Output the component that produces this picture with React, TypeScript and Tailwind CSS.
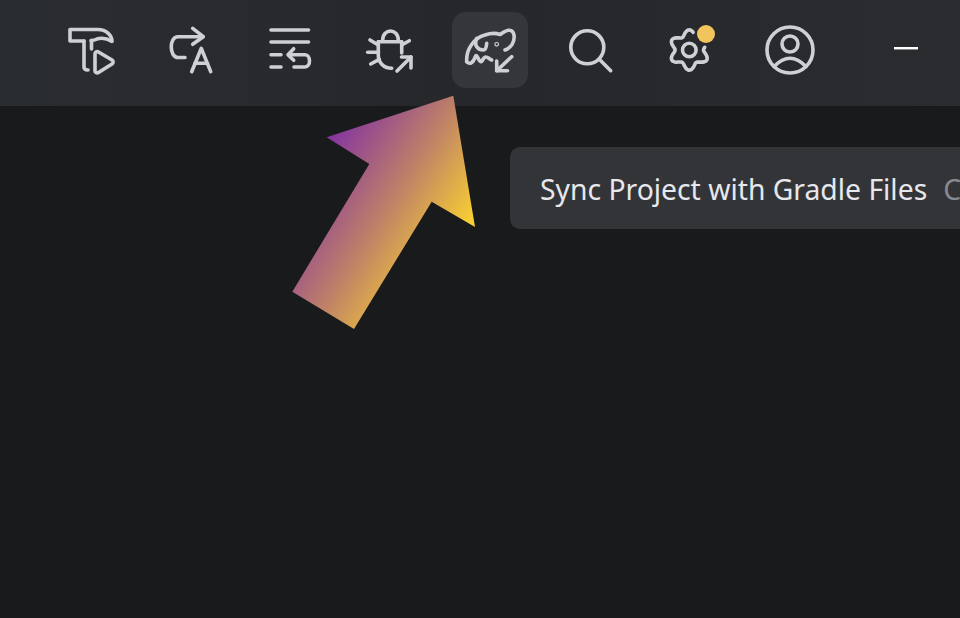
const gearPath = (() => {
  const pts: string[] = [];
  for (let i = 0; i <= 60; i++) {
    const t = Math.PI * (0.433 + (i / 60) * 1.622);
    const r = 17.2 - 3 * Math.cos(6 * t);
    const x = 37.3 + r * Math.cos(t);
    const y = 38 - r * Math.sin(t);
    pts.push(`${i === 0 ? "M" : "L"}${x.toFixed(2)} ${y.toFixed(2)}`);
  }
  return pts.join(" ");
})();

function Icon({ children }: { children: React.ReactNode }) {
  return (
    <svg
      width="76"
      height="76"
      viewBox="0 0 76 76"
      fill="none"
      stroke="#ced0d6"
      strokeWidth="3.6"
      strokeLinecap="round"
      strokeLinejoin="round"
    >
      {children}
    </svg>
  );
}

const icons = [
  <>
    <path d="M32 29H18V17.5H46C54 17.5 60 23 60 29.5C55 26.5 50 25.5 45 27C43 28 41 28.5 39 28.5" />
    <path d="M32 29V55C32 57 33 58 36 58" />
    <path d="M39.5 29V37" />
    <path d="M43 42C43 40 45 39 46.5 40L60 48C61.5 49 61.5 51 60 52L46.5 60.5C45 61.5 43 60.5 43 59Z" />
  </>,
  <>
    <path d="M33 45.5H26C17 45.5 17 24.7 26 24.7H51" />
    <path d="M40.7 16.3L51.3 24.7L40.7 32.3" />
    <path d="M39.7 59.7L49.3 36.3L58.7 59.7" />
    <path d="M43 51.3H55.3" />
  </>,
  <>
    <path d="M19 18H56.5" />
    <path d="M19 30H56.5" />
    <path d="M19 42.7H29" />
    <path d="M19 55H29" />
    <path d="M37 42.7H53C59 42.7 59 55 53 55H42" />
    <path d="M41.7 36.7L36 42.7L41.7 48.3" />
  </>,
  <>
    <path d="M26.3 29.7H49.7" />
    <path d="M30.7 28C31 16 46 16 46.3 28" />
    <path d="M26.3 29.7V43C26.3 50 31 56.3 39.7 56.3" />
    <path d="M49.7 29.7V41" />
    <path d="M18 28L26.3 33" />
    <path d="M15.7 40.3H26.3" />
    <path d="M18.7 52L27.3 47.3" />
    <path d="M57.3 28.7L49.7 33" />
    <path d="M45 59L59 45" />
    <path d="M49.5 45H59V56" />
  </>,
  <>
    <path d="M14.7 49.7C14 37 22 26 33 23C39 21 44 21 48 22.5C52 20 60 14 62 23C63 30 59 36 53 38" />
    <path d="M14.7 49.7C18 53 21 51 23.7 44C25 42 27 49.7 29 49.7C31 49.7 31 44.7 34 45C36 45 37 47 39.7 48" />
    <path d="M24.7 26.3C22 33 25 38 31.3 38C33.5 38 34.5 34 34.7 31.3" />
    <circle cx="44.7" cy="32.3" r="0.6" />
    <path d="M59.7 44.7L44.7 58.7" />
    <path d="M44.7 49V58.7H55.5" />
  </>,
  <>
    <circle cx="35.3" cy="35.3" r="16.5" />
    <path d="M47.3 47.3L58.7 58.7" />
  </>,
  <>
    <path d={gearPath} />
    <circle cx="37.3" cy="38" r="6.8" />
  </>,
  <>
    <circle cx="38" cy="38" r="23" />
    <circle cx="38" cy="32" r="8" />
    <path d="M22 54.5Q38 38 54 54.5" />
  </>,
];

export default function App() {
  return (
    <div className="relative w-full h-[618px] overflow-hidden bg-[#191a1c] font-['Noto_Sans','Open_Sans',sans-serif]">
      <div className="h-[106px] bg-linear-to-r from-[#2a2d30] via-[#26272b] to-[#2a2c30] pl-[52px] pt-3 flex items-start gap-6">
        {icons.map((icon, i) => (
          <div
            key={i}
            className={`relative w-[76px] h-[76px] shrink-0 rounded-[14px] ${i === 4 ? "bg-[#35363b]" : ""}`}
          >
            <Icon>{icon}</Icon>
            {i === 6 && (
              <span className="absolute left-[45px] top-[12.5px] w-[18px] h-[18px] rounded-full bg-[#f2c55c]" />
            )}
          </div>
        ))}
        <div className="ml-4 w-[76px] h-[73px] shrink-0 flex items-center justify-center">
          <div className="w-[24px] h-[3px] bg-white border-b border-[#8a8b8d]" />
        </div>
      </div>

      <svg className="absolute left-0 top-0" width="960" height="340" viewBox="0 0 960 340">
        <defs>
          <linearGradient id="arrow" gradientUnits="userSpaceOnUse" x1="330" y1="137" x2="474" y2="229">
            <stop offset="0" stopColor="#86359f" />
            <stop offset="0.5" stopColor="#bd8068" />
            <stop offset="1" stopColor="#fdd52e" />
          </linearGradient>
        </defs>
        <polygon
          fill="url(#arrow)"
          points="453.3,95.7 475,227 431.7,201.7 354,329 292.3,291.7 369.3,164 326.7,137.3"
        />
      </svg>

      <div className="absolute left-[510px] top-[147px] h-[82px] w-[600px] rounded-[10px] bg-[#333438] flex items-center pl-[30px] pt-[2px] text-[28.3px] whitespace-nowrap">
        <span className="text-[#e6e8ec]">Sync Project with Gradle Files</span>
        <span className="ml-4 text-[#868a91]">Ctrl+Shift+O</span>
      </div>
    </div>
  );
}
